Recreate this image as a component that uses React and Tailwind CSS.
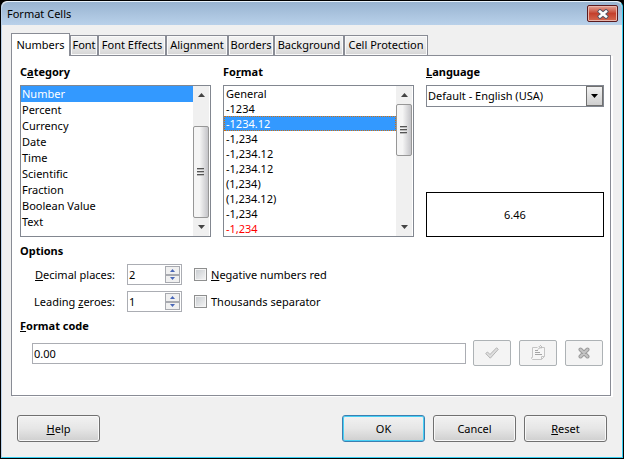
import { useState } from "react";
import clsx from "clsx";

const tabs = [
  { name: "Numbers", width: "w-[59px]" },
  { name: "Font", width: "w-7" },
  { name: "Font Effects", width: "w-[68px]" },
  { name: "Alignment", width: "w-[62px]" },
  { name: "Borders", width: "w-[46px]" },
  { name: "Background", width: "w-[70px]" },
  { name: "Cell Protection", width: "w-[84px]" },
];

const categories = [
  "Number",
  "Percent",
  "Currency",
  "Date",
  "Time",
  "Scientific",
  "Fraction",
  "Boolean Value",
  "Text",
];

const formats = [
  "General",
  "-1234",
  "-1234.12",
  "-1,234",
  "-1,234.12",
  "-1,234.12",
  "(1,234)",
  "(1,234.12)",
  "-1,234",
  "-1,234",
];

function Arrow({ up, className = "h-1 w-[7px]" }) {
  return (
    <svg viewBox="0 0 7 4" className={className} aria-hidden="true">
      <path d={up ? "M0 4 3.5 0 7 4z" : "M0 0h7L3.5 4z"} fill="currentColor" />
    </svg>
  );
}

function ScrollBar({ before, thumb }) {
  return (
    <div className="flex w-4 shrink-0 flex-col bg-[#f0f0f0]">
      <button type="button" aria-label="Scroll up" className="flex h-[18px] shrink-0 items-center justify-center text-[#444]">
        <Arrow up />
      </button>
      <div className={before} />
      <div
        className={clsx(
          "flex shrink-0 items-center justify-center rounded-xs border border-[#979797] bg-linear-to-r from-[#f5f5f5] from-40% to-[#c4c4c8]",
          thumb,
        )}
      >
        <svg viewBox="0 0 8 9" className="h-[9px] w-2" aria-hidden="true">
          <path d="M0 .5h7M0 3.5h7M0 6.5h7" stroke="#555" />
          <path d="M0 1.5h7M0 4.5h7M0 7.5h7" stroke="#bbb" />
        </svg>
      </div>
      <div className="grow" />
      <button type="button" aria-label="Scroll down" className="flex h-[18px] shrink-0 items-center justify-center text-[#444]">
        <Arrow />
      </button>
    </div>
  );
}

function Heading({ children, id }) {
  return (
    <h2 id={id} className="h-4 font-bold whitespace-nowrap">
      {children}
    </h2>
  );
}

function Spinner({ id, value, onChange }) {
  return (
    <div className="flex h-[21px] w-[55px] border border-[#abadb3] bg-white p-px">
      <input
        id={id}
        type="number"
        min="0"
        value={value}
        onChange={(e) => onChange(Number(e.target.value))}
        className="w-0 grow appearance-none outline-none [appearance:textfield] [&::-webkit-inner-spin-button]:appearance-none"
      />
      <div className="flex w-[15px] flex-col text-[#4a67b8]">
        <button
          type="button"
          aria-label="Increase"
          onClick={() => onChange(value + 1)}
          className="flex grow items-center justify-center border border-[#a8aab0] bg-[#f0f0f0]"
        >
          <Arrow up className="h-[3px] w-[5px]" />
        </button>
        <button
          type="button"
          aria-label="Decrease"
          onClick={() => onChange(Math.max(0, value - 1))}
          className="flex grow items-center justify-center border border-[#a8aab0] bg-[#f0f0f0]"
        >
          <Arrow className="h-[3px] w-[5px]" />
        </button>
      </div>
    </div>
  );
}

function Check({ children }) {
  return (
    <label className="flex items-center gap-1 whitespace-nowrap">
      <input
        type="checkbox"
        className="size-[13px] shrink-0 appearance-none border border-[#8e8f8f] bg-linear-to-br from-[#c6cace] to-[#f6f6f6] ring-1 ring-[#f4f4f4] ring-inset checked:bg-[#3399ff]"
      />
      <span>{children}</span>
    </label>
  );
}

function ToolButton({ label, children }) {
  return (
    <button
      type="button"
      disabled
      aria-label={label}
      className="flex h-[26px] w-[38px] items-center justify-center rounded-xs border border-[#adb2b5] bg-[#f4f4f4]"
    >
      {children}
    </button>
  );
}

function DialogButton({ primary, children }) {
  return (
    <button
      type="button"
      className={clsx(
        "h-[27px] w-[83px] rounded-[3px] border bg-linear-to-b from-[#f2f2f2] from-0% via-[#e6e6e6] via-50% to-[#cfcfcf] ring-1 ring-inset",
        primary ? "border-[#3c7fb1] ring-[#48d0f5]" : "border-[#707070] ring-[#f8f8f8]",
      )}
    >
      {children}
    </button>
  );
}

export default function App() {
  const [tab, setTab] = useState("Numbers");
  const [category, setCategory] = useState(0);
  const [format, setFormat] = useState(2);
  const [decimals, setDecimals] = useState(2);
  const [zeroes, setZeroes] = useState(1);
  const [code, setCode] = useState("0.00");

  return (
    <div className="flex min-h-screen flex-col bg-black p-px font-['Noto_Sans',sans-serif] text-[11px] leading-4 text-black">
      <main className="flex grow flex-col rounded-t-md border border-t-[#e8f2fb] border-r-[#35cdf0] border-b-[#35cdf0] border-l-[#b9d1ea] bg-[#f0f0f0]">
        <header className="flex h-[23px] items-start justify-between rounded-t-md bg-linear-to-b from-[#99b4d1] to-[#b9d1ea] pr-1 pl-[5px]">
          <h1 className="pt-1">Format Cells</h1>
          <button
            type="button"
            aria-label="Close"
            className="mt-[3px] flex h-[17px] w-[31px] items-center justify-center rounded-xs border border-[#5a1a1e] bg-linear-to-b from-[#e0a297] via-[#c4402c] via-50% to-[#d4684f] ring-1 ring-[#e9b5ab] ring-inset"
          >
            <svg viewBox="0 0 12 10" className="h-[10px] w-3" aria-hidden="true">
              <path d="M3 2.5 9 7.5M9 2.5 3 7.5" stroke="#535666" strokeWidth="4.4" strokeLinecap="square" />
              <path d="M3 2.5 9 7.5M9 2.5 3 7.5" stroke="#fff" strokeWidth="2.6" strokeLinecap="square" />
            </svg>
          </button>
        </header>

        <div className="flex grow flex-col pt-2 pr-[11px] pl-[9px]">
          <div role="tablist" className="flex items-end">
            {tabs.map(({ name, width }) => (
              <button
                key={name}
                type="button"
                role="tab"
                aria-selected={tab === name}
                onClick={() => setTab(name)}
                className={clsx(
                  "flex shrink-0 justify-center border border-b-0 border-[#898c95] whitespace-nowrap",
                  width,
                  tab === name
                    ? "relative -mb-px h-[23px] bg-white pt-[3px]"
                    : "h-5 bg-linear-to-b from-[#f2f2f2] via-[#ebebeb] via-50% to-[#d4d4d4] pt-px ring-1 ring-[#fafafa] ring-inset",
                )}
              >
                {name}
              </button>
            ))}
          </div>

          <section className="flex grow flex-col border border-[#898c95] bg-white pt-2 pr-[6px] pb-7 pl-2 shadow-[2px_1px_0_#fff]">
            <div className="flex gap-3">
              <div className="flex flex-1 flex-col gap-[5px]">
                <Heading id="category">
                  C<u>a</u>tegory
                </Heading>
                <div className="flex h-[152px] border border-[#828790] pr-px">
                  <ul role="listbox" aria-labelledby="category" className="grow">
                    {categories.map((name, i) => (
                      <li
                        key={name}
                        role="option"
                        aria-selected={category === i}
                        onClick={() => setCategory(i)}
                        className={clsx("h-4 pl-px", category === i && "bg-[#3399ff] text-white")}
                      >
                        {name}
                      </li>
                    ))}
                  </ul>
                  <ScrollBar before="h-[22px] shrink-0" thumb="h-[92px]" />
                </div>
              </div>

              <div className="flex flex-1 flex-col gap-[5px]">
                <Heading id="format">
                  Fo<u>r</u>mat
                </Heading>
                <div className="flex h-[152px] border border-[#828790] pr-px">
                  <ul role="listbox" aria-labelledby="format" className="grow">
                    {formats.map((name, i) => (
                      <li
                        key={i}
                        role="option"
                        aria-selected={format === i}
                        onClick={() => setFormat(i)}
                        className={clsx(
                          "h-[15px] border pl-px leading-[13px]",
                          format === i ? "border-dotted border-[#d07010] bg-[#3399ff] text-white" : "border-transparent",
                          i === 9 && "text-[#ff0000]",
                        )}
                      >
                        {name}
                      </li>
                    ))}
                  </ul>
                  <ScrollBar before="h-0" thumb="h-[52px]" />
                </div>
              </div>

              <div className="flex w-[178px] shrink-0 flex-col gap-[5px]">
                <label htmlFor="language" className="h-4 font-bold">
                  <u>L</u>anguage
                </label>
                <div className="relative">
                  <select
                    id="language"
                    className="h-[22px] w-full appearance-none border border-[#828790] bg-white pr-5 pl-px leading-4 outline-none"
                  >
                    <option>Default - English (USA)</option>
                  </select>
                  <span className="pointer-events-none absolute top-px right-px flex h-5 w-[17px] items-center justify-center border border-[#707070] bg-linear-to-b from-[#f2f2f2] to-[#cfcfcf]">
                    <Arrow />
                  </span>
                </div>
                <output className="mt-auto flex h-[45px] items-center justify-center border border-black">6.46</output>
              </div>
            </div>

            <div className="mt-[6px] flex flex-col gap-[5px]">
              <Heading>Options</Heading>
              <div className="grid grid-cols-[95px_55px_1fr] items-center gap-x-3 gap-y-[6px]">
                <label htmlFor="decimals" className="text-right whitespace-nowrap">
                  <u>D</u>ecimal places:
                </label>
                <Spinner id="decimals" value={decimals} onChange={setDecimals} />
                <Check>
                  <u>N</u>egative numbers red
                </Check>
                <label htmlFor="zeroes" className="text-right whitespace-nowrap">
                  Leading <u>z</u>eroes:
                </label>
                <Spinner id="zeroes" value={zeroes} onChange={setZeroes} />
                <Check>Thousands separator</Check>
              </div>
            </div>

            <label htmlFor="code" className="mt-[6px] h-4 font-bold">
              <u>F</u>ormat code
            </label>
            <div className="mt-[6px] flex items-center gap-[7px] pr-px pl-3">
              <input
                id="code"
                value={code}
                onChange={(e) => setCode(e.target.value)}
                className="h-[21px] w-0 grow border border-[#abadb3] bg-white pl-px outline-none"
              />
              <div className="flex gap-2">
                <ToolButton label="Add">
                  <svg viewBox="0 0 14 12" className="h-3 w-[14px]" aria-hidden="true">
                    <path d="M.7 6.5 2.5 5 5 7.5 11.5.8 13.3 2.3 5.3 11.2z" fill="#dedede" stroke="#b4b4b4" strokeLinejoin="round" />
                  </svg>
                </ToolButton>
                <ToolButton label="Edit comment">
                  <svg viewBox="0 0 16 16" className="size-4" fill="none" stroke="#c4c4c4" aria-hidden="true">
                    <path d="M7.5 2.5h-5v10h-1v1l1 1h9l3-3v-9h-3" fill="#f6f6f6" />
                    <path d="M11.5 14.5v-3h3" />
                    <path d="M5 5.5h3M5 7.5h5M5 9.5h7" stroke="#a5a5a5" />
                    <path d="M8 4.5 9.5 3M9 1.5l2 2M9.5 1.5 10.5.5l1 1-.5 1.5" stroke="#aaa" />
                  </svg>
                </ToolButton>
                <ToolButton label="Remove">
                  <svg viewBox="0 0 12 12" className="size-3" strokeLinecap="round" aria-hidden="true">
                    <path d="m2.5 2.5 7 7m0-7-7 7" stroke="#9c9c9c" strokeWidth="4" />
                    <path d="m2.5 2.5 7 7m0-7-7 7" stroke="#c4c4c4" strokeWidth="2" />
                  </svg>
                </ToolButton>
              </div>
            </div>
          </section>

          <footer className="flex gap-2 pt-[19px] pr-1 pb-[15px] pl-[6px]">
            <DialogButton>
              <u>H</u>elp
            </DialogButton>
            <div className="grow" />
            <DialogButton primary>OK</DialogButton>
            <DialogButton>Cancel</DialogButton>
            <DialogButton>
              <u>R</u>eset
            </DialogButton>
          </footer>
        </div>
      </main>
    </div>
  );
}
